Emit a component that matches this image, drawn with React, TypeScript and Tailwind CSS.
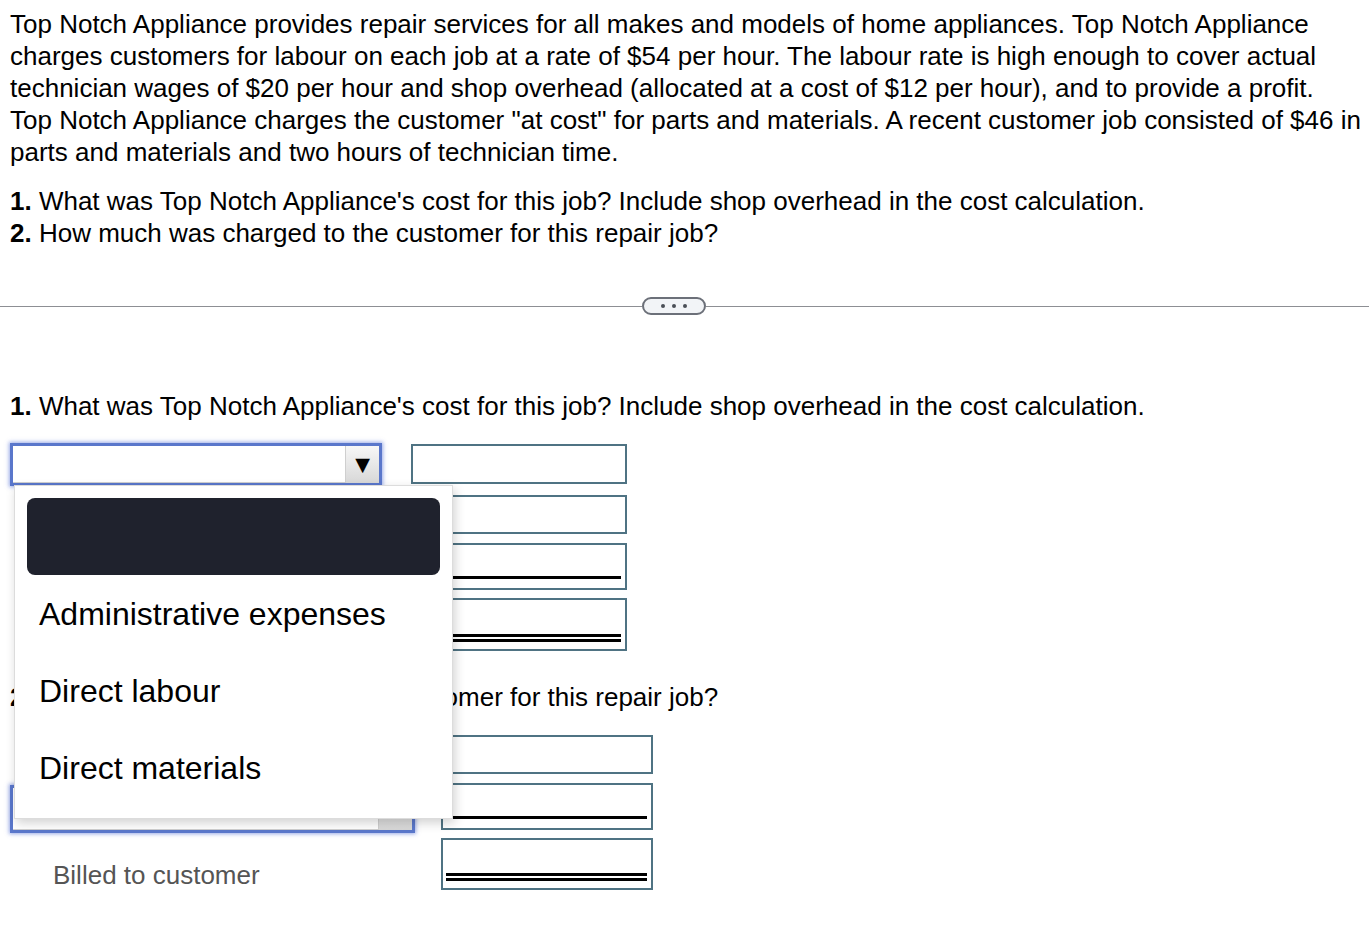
import React from 'react';

const font = { fontFamily: '"Liberation Sans", Arial, Helvetica, sans-serif' };

function AmountBox({ lines = 0, className = '' }: { lines?: 0 | 1 | 2; className?: string }) {
  return (
    <div className={`flex flex-col justify-end border-2 border-[#4f7383] bg-white ${className}`}>
      {lines === 1 && <div className="mb-[9px] ml-[3px] mr-[4px] h-[3px] bg-black" />}
      {lines === 2 && <div className="mb-[7px] ml-[3px] mr-[4px] h-[8px] border-y-[3px] border-black" />}
    </div>
  );
}

function SelectBox({ className = '' }: { className?: string }) {
  return (
    <div
      className={`flex border-[3px] border-[#5a77cb] bg-white shadow-[0_0_4px_1px_rgba(70,100,210,0.55)] ${className}`}
    >
      <div className="flex-1 border-b border-[#d0d0d0]" />
      <div className="flex w-[34px] items-center justify-center border-l border-[#cfcfcf] bg-gradient-to-b from-[#f7f7f7] to-[#d8d8d8] text-[25px] leading-none text-black">
        ▼
      </div>
    </div>
  );
}

export default function App() {
  return (
    <div className="relative min-h-[935px] bg-white text-[26px] leading-[32px] text-black" style={font}>
      <div className="px-[10px] pt-[8px]">
        <p className="whitespace-nowrap">
          Top Notch Appliance provides repair services for all makes and models of home appliances. Top Notch Appliance
          <br />
          charges customers for labour on each job at a rate of $54 per hour. The labour rate is high enough to cover actual
          <br />
          technician wages of $20 per hour and shop overhead (allocated at a cost of $12 per hour), and to provide a profit.
          <br />
          Top Notch Appliance charges the customer "at cost" for parts and materials. A recent customer job consisted of $46 in
          <br />
          parts and materials and two hours of technician time.
        </p>
        <div className="mt-[17px]">
          <p>
            <span className="font-bold">1.</span> What was Top Notch Appliance's cost for this job? Include shop overhead in the cost calculation.
          </p>
          <p>
            <span className="font-bold">2.</span> How much was charged to the customer for this repair job?
          </p>
        </div>
      </div>

      {/* divider */}
      <div className="mt-[48px] flex items-center">
        <div className="h-px w-[642px] bg-[#8d8f94]" />
        <div className="flex h-[18px] w-[64px] items-center justify-center gap-[7px] rounded-full border-2 border-[#6c7079] bg-[#f2f4f7]">
          <span className="h-[4px] w-[4px] rounded-full bg-[#4b4f57]" />
          <span className="h-[4px] w-[4px] rounded-full bg-[#4b4f57]" />
          <span className="h-[4px] w-[4px] rounded-full bg-[#4b4f57]" />
        </div>
        <div className="h-px flex-1 bg-[#8d8f94]" />
      </div>

      <div className="px-[10px] pt-[75px]">
        <p>
          <span className="font-bold">1.</span> What was Top Notch Appliance's cost for this job? Include shop overhead in the cost calculation.
        </p>

        {/* section 1 */}
        <div className="mt-[21px] flex flex-col">
          <div className="flex gap-[29px]">
            <SelectBox className="h-[43px] w-[372px]" />
            <AmountBox className="mt-[1px] h-[40px] w-[216px]" />
          </div>
          <div className="mt-[9px] flex gap-[29px]">
            <div className="w-[372px]" />
            <AmountBox className="h-[39px] w-[216px]" />
          </div>
          <div className="mt-[9px] flex gap-[29px]">
            <div className="w-[372px]" />
            <AmountBox lines={1} className="h-[47px] w-[216px]" />
          </div>
          <div className="mt-[8px] flex gap-[29px]">
            <div className="w-[372px]" />
            <AmountBox lines={2} className="h-[53px] w-[216px]" />
          </div>
        </div>

        <p className="mt-[30px]">
          <span className="font-bold">2.</span> How much was charged to the customer for this repair job?
        </p>

        {/* section 2 */}
        <div className="mt-[22px] flex flex-col">
          <div className="flex gap-[26px]">
            <div className="w-[405px]" />
            <AmountBox className="h-[39px] w-[212px]" />
          </div>
          <div className="mt-[9px] flex gap-[26px]">
            <SelectBox className="mt-[2px] h-[48px] w-[405px]" />
            <AmountBox lines={1} className="h-[47px] w-[212px]" />
          </div>
          <div className="mt-[5px] flex gap-[26px]">
            <div className="w-[405px] pl-[43px] pt-[21px] text-[#555555]">Billed to customer</div>
            <AmountBox lines={2} className="h-[52px] w-[212px]" />
          </div>
        </div>
      </div>

      {/* open dropdown list */}
      <div className="absolute left-[14px] top-[485px] w-[439px] border border-[#dcdcdc] bg-white p-[12px] shadow-[2px_4px_10px_rgba(0,0,0,0.18)]">
        <div className="h-[77px] rounded-[8px] bg-[#1f222d]" />
        <div className="flex h-[77px] items-center pl-[12px] text-[32px]">Administrative expenses</div>
        <div className="flex h-[77px] items-center pl-[12px] text-[32px]">Direct labour</div>
        <div className="flex h-[77px] items-center pl-[12px] text-[32px]">Direct materials</div>
      </div>
    </div>
  );
}
